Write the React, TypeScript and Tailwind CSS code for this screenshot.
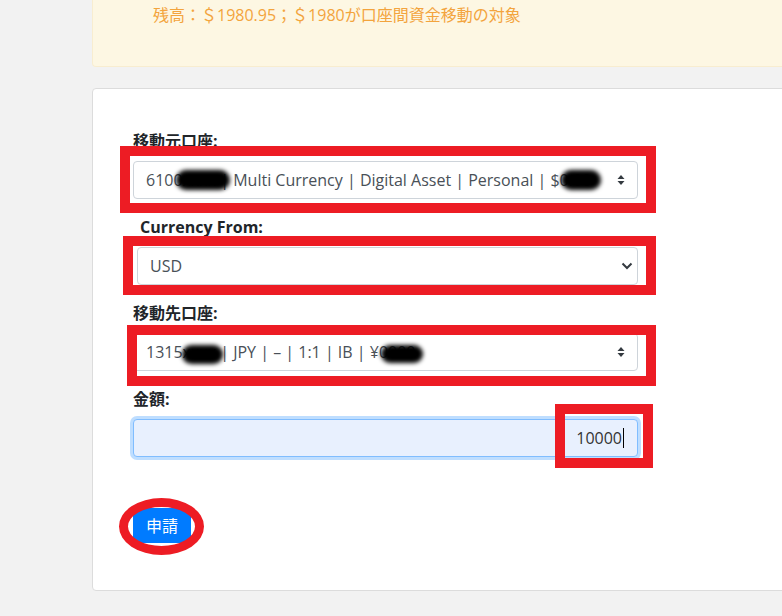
import { ReactNode } from "react";

const font = { fontFamily: '"Open Sans", "Noto Sans CJK JP", sans-serif' };

const UpDown = () => (
  <svg width="8" height="12" viewBox="0 0 8 12" className="absolute right-[12px] top-1/2 -translate-y-1/2">
    <path d="M4 1 L7.5 5 H0.5 Z" fill="#343a40" />
    <path d="M4 11 L7.5 7 H0.5 Z" fill="#343a40" />
  </svg>
);

const Chevron = () => (
  <svg width="12" height="8" viewBox="0 0 12 8" className="absolute right-[4px] top-1/2 -translate-y-1/2">
    <path d="M1.5 1.5 L6 6 L10.5 1.5" fill="none" stroke="#343a40" strokeWidth="2" />
  </svg>
);

const Field = ({ label, children, labelClass = "" }: { label: string; children: ReactNode; labelClass?: string }) => (
  <div>
    <div className={`font-bold text-[16px] leading-6 text-[#212529] mb-2 ${labelClass}`}>{label}</div>
    {children}
  </div>
);

const FakeSelect = ({ text, icon, className = "" }: { text: string; icon: ReactNode; className?: string }) => (
  <div
    className={`relative h-[38px] border border-[#ced4da] rounded bg-white pl-3 flex items-center text-[16px] text-[#495057] overflow-hidden whitespace-nowrap ${className}`}
  >
    {text}
    {icon}
  </div>
);

export default function App() {
  return (
    <div className="w-[782px] h-[616px] bg-[#f2f2f2] overflow-hidden pl-[92px]" style={font}>
      {/* balance notice */}
      <div className="w-[720px] h-[67px] bg-[#fdf7e3] border border-t-0 border-[#f8edd0] rounded-b pl-[60px] pt-[3px]">
        <p className="text-[16px] text-[#f3a43d] leading-[24px]">残高：＄1980.95；＄1980が口座間資金移動の対象</p>
      </div>

      {/* form card */}
      <div className="relative mt-[21px] w-[720px] h-[503px] bg-white border border-[#dcdcdc] rounded pt-[40px] pl-[40px]">
        <div className="flex flex-col gap-4 w-[505px]">
          <Field label="移動元口座:">
            <FakeSelect text="6100xxxx | Multi Currency | Digital Asset | Personal | $0.00" icon={<UpDown />} />
          </Field>
          <Field label="Currency From:" labelClass="pl-[7px]">
            <FakeSelect text="USD" icon={<Chevron />} className="ml-[4px] pl-[12px]" />
          </Field>
          <Field label="移動先口座:">
            <FakeSelect text="1315xxxx | JPY | – | 1:1 | IB | ¥0000" icon={<UpDown />} />
          </Field>
          <Field label="金額:">
            <div className="h-[38px] border border-[#80bdff] rounded bg-[#e8f0fe] shadow-[0_0_0_3px_rgba(0,123,255,0.25)] flex items-center justify-end pr-[13px] text-[16px] text-[#333]">
              10000
              <span className="inline-block w-px h-[20px] bg-black ml-px" />
            </div>
          </Field>
        </div>

        <button className="mt-[51px] h-[35px] w-[58px] rounded bg-[#007bff] text-white text-[16px]">申請</button>

        {/* redactions */}
        <span className="absolute left-[83px] top-[81px] w-[54px] h-[20px] bg-black rounded-full blur-[2px]" />
        <span className="absolute left-[468px] top-[81px] w-[40px] h-[20px] bg-black rounded-full blur-[2px]" />
        <span className="absolute left-[89px] top-[256px] w-[41px] h-[19px] bg-black rounded-full blur-[2px]" />
        <span className="absolute left-[288px] top-[256px] w-[42px] h-[18px] bg-black rounded-full blur-[2px]" />

        {/* red annotations */}
        <div className="absolute left-[27px] top-[57px] w-[536px] h-[67px] border-[10px] border-[#ed1c24]" />
        <div className="absolute left-[30px] top-[147px] w-[533px] h-[59px] border-[10px] border-[#ed1c24]" />
        <div className="absolute left-[34px] top-[236px] w-[529px] h-[61px] border-[10px] border-[#ed1c24]" />
        <div className="absolute left-[462px] top-[315px] w-[98px] h-[64px] border-[10px] border-[#ed1c24]" />
        <div className="absolute left-[26px] top-[409px] w-[85px] h-[57px] border-[9px] border-[#ed1c24] rounded-[50%]" />
      </div>
    </div>
  );
}
